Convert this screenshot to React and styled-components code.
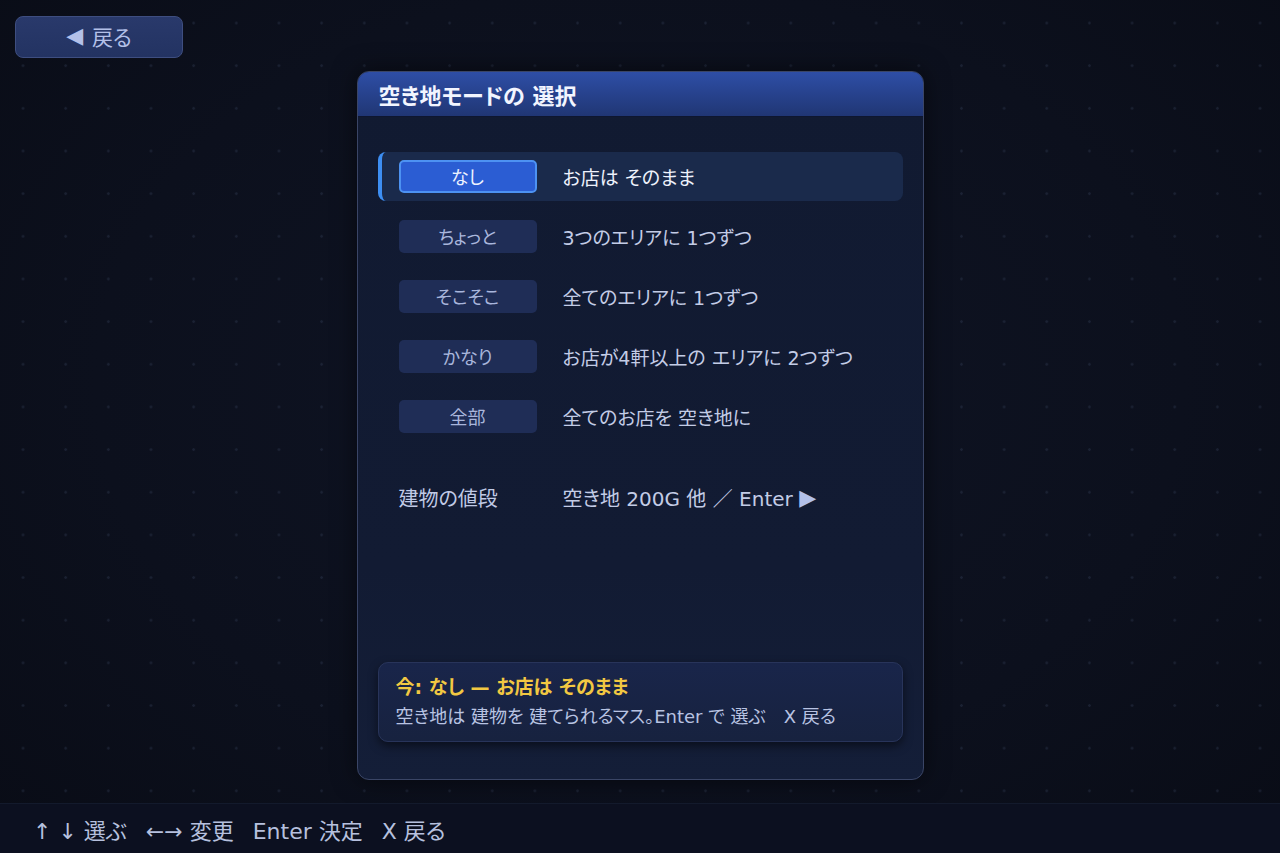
import React from "react";
import styled, { createGlobalStyle } from "styled-components";

const Global = createGlobalStyle`
  * { box-sizing: border-box; }
  html, body { margin: 0; padding: 0; height: 100%; }
  body {
    background: #0c101d;
    font-family: "DejaVu Sans", "Noto Sans CJK JP", sans-serif;
    font-feature-settings: "palt" 1;
    color: #c4cde6;
  }
`;

const Page = styled.div`
  width: 1280px;
  height: 853px;
  display: flex;
  flex-direction: column;
  overflow: hidden;
  background-color: #0c101d;
  background-image:
    radial-gradient(circle, rgba(60, 72, 100, 0.3) 1px, transparent 1.6px),
    radial-gradient(ellipse at 50% 45%, #0f1424 0%, #0c101d 60%, #090c16 100%);
  background-size: 42.67px 42.67px, 100% 100%;
  background-position: 1.7px 1.7px, 0 0;
`;

const TopBar = styled.div`
  display: flex;
  padding: 16px 15px 0;
  height: 58px;
`;

const BackButton = styled.button`
  width: 168px;
  height: 42px;
  border-radius: 8px;
  border: 1px solid #3e4e80;
  background: linear-gradient(#29396b, #233362);
  color: #b3c0e8;
  font-family: inherit;
  font-feature-settings: "palt" 1;
  font-size: 21px;
  display: flex;
  align-items: center;
  justify-content: center;
  gap: 9px;
  padding: 0 0 2px;
  cursor: pointer;
`;

const Tri = styled.span`
  font-size: ${(p) => p.$size || "22px"};
  font-family: "DejaVu Sans", sans-serif;
  color: #b3c0e8;
  line-height: 1;
`;

const Main = styled.div`
  flex: 1;
  display: flex;
  justify-content: center;
  padding-top: 13px;
`;

const Panel = styled.section`
  width: 567px;
  height: 709px;
  border: 1px solid #3a4566;
  border-radius: 12px;
  background: linear-gradient(#111a31, #121b33 70%, #141e38);
  box-shadow: 0 0 24px rgba(0, 0, 0, 0.55);
  display: flex;
  flex-direction: column;
  overflow: hidden;
`;

const PanelHeader = styled.header`
  height: 45px;
  flex: none;
  background: linear-gradient(#2e4ea6, #203674);
  border-bottom: 1px solid #0e1630;
  display: flex;
  align-items: center;
  padding-left: 21px;
  color: #f2f5ff;
  font-size: 22px;
  font-weight: 700;
`;

const PanelBody = styled.div`
  flex: 1;
  display: flex;
  flex-direction: column;
  padding: 35px 20px 37px;
`;

const List = styled.div`
  display: flex;
  flex-direction: column;
  gap: 11px;
`;

const Row = styled.div`
  height: 49px;
  display: flex;
  align-items: center;
  gap: 26px;
  padding-left: 17px;
  border-left: 4px solid ${(p) => (p.$active ? "#3d8ef2" : "transparent")};
  border-radius: 8px;
  background: ${(p) => (p.$active ? "#1a2a4b" : "transparent")};
  margin-top: ${(p) => (p.$spaced ? "21px" : "0")};
`;

const Chip = styled.div`
  width: 138px;
  height: 33px;
  flex: none;
  border-radius: 5px;
  display: flex;
  align-items: center;
  justify-content: center;
  font-size: 18px;
  padding-bottom: 1px;
  background: ${(p) => (p.$active ? "#2b5dd3" : "#1f2d56")};
  border: ${(p) => (p.$active ? "2px solid #4d92f2" : "none")};
  color: ${(p) => (p.$active ? "#eef3ff" : "#a9b6dc")};
`;

const Label = styled.div`
  width: 138px;
  flex: none;
  font-size: 20px;
  color: #c0cae6;
`;

const Desc = styled.div`
  font-size: 19px;
  white-space: pre;
  color: ${(p) => (p.$active ? "#eef2fc" : "#c3cce6")};
`;

const Value = styled.div`
  font-size: 20px;
  white-space: pre;
  display: flex;
  align-items: center;
  color: #c3cce6;
`;

const Info = styled.div`
  margin-top: auto;
  border: 1px solid #28345a;
  border-radius: 10px;
  background: linear-gradient(#19254a, #17223f);
  box-shadow: 0 4px 10px rgba(0, 0, 0, 0.5);
  padding: 11px 17px 11px;
  display: flex;
  flex-direction: column;
  gap: 4px;
`;

const InfoTitle = styled.div`
  color: #f2c842;
  font-size: 19px;
  font-weight: 700;
  line-height: 26px;
`;

const InfoText = styled.div`
  color: #b8c3e2;
  font-size: 18px;
  line-height: 26px;
  white-space: pre;
`;

const Footer = styled.footer`
  height: 50px;
  flex: none;
  background: #0c1020;
  border-top: 1px solid #131a2c;
  display: flex;
  align-items: center;
  padding-left: 33px;
  gap: 19px;
  color: #b6c0de;
  font-size: 22px;
`;

const Hint = styled.span`
  white-space: pre;
`;

const options = [
  { key: "なし", desc: "お店は そのまま" },
  { key: "ちょっと", desc: "3つのエリアに 1つずつ" },
  { key: "そこそこ", desc: "全てのエリアに 1つずつ" },
  { key: "かなり", desc: "お店が4軒以上の エリアに 2つずつ" },
  { key: "全部", desc: "全てのお店を 空き地に" },
];

export default function App() {
  const selected = 0;
  return (
    <>
      <Global />
      <Page>
        <TopBar>
          <BackButton>
            <Tri $size="22px">◀</Tri>
            <span>戻る</span>
          </BackButton>
        </TopBar>
        <Main>
          <Panel>
            <PanelHeader>空き地モードの 選択</PanelHeader>
            <PanelBody>
              <List>
                {options.map((o, i) => (
                  <Row key={o.key} $active={i === selected}>
                    <Chip $active={i === selected}>{o.key}</Chip>
                    <Desc $active={i === selected}>{o.desc}</Desc>
                  </Row>
                ))}
                <Row $spaced>
                  <Label>建物の値段</Label>
                  <Value>
                    空き地 200G 他 ／ Enter <Tri $size="22px">▶</Tri>
                  </Value>
                </Row>
              </List>
              <Info>
                <InfoTitle>今: なし — お店は そのまま</InfoTitle>
                <InfoText>空き地は 建物を 建てられるマス。Enter で 選ぶ　X 戻る</InfoText>
              </Info>
            </PanelBody>
          </Panel>
        </Main>
        <Footer>
          <Hint>↑ ↓ 選ぶ</Hint>
          <Hint>←→ 変更</Hint>
          <Hint>Enter 決定</Hint>
          <Hint>X 戻る</Hint>
        </Footer>
      </Page>
    </>
  );
}
